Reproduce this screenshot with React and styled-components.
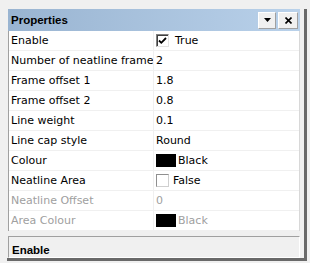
import React from 'react';
import styled, {createGlobalStyle} from 'styled-components';

const GlobalStyle = createGlobalStyle`
  html, body {
    margin: 0;
    padding: 0;
    background: #f0f0f0;
    font-family: "DejaVu Sans", "Liberation Sans", sans-serif;
  }
`;

const Panel = styled.div`
  box-sizing: border-box;
  margin: 9px 0 0 7px;
  width: 300px;
  height: 252px;
  padding: 0 4px 0 1px;
  background: #f0f0f0;
  border-right: 3px solid #696969;
  border-bottom: 3px solid #696969;
  display: flex;
  flex-direction: column;
  overflow: hidden;
`;

const TitleBar = styled.div`
  height: 22px;
  flex: none;
  display: flex;
  align-items: center;
  padding: 0 2px 0 3px;
  background: linear-gradient(to right, #99b4d1, #b9d1ea);
`;

const Title = styled.div`
  flex: 1;
  font-family: "Liberation Sans", Arial, sans-serif;
  font-weight: bold;
  font-size: 11.5px;
  color: #000;
`;

const TitleButton = styled.button`
  box-sizing: border-box;
  width: ${p => p.$w}px;
  height: 17px;
  margin-left: 2px;
  padding: 0;
  display: flex;
  align-items: center;
  justify-content: center;
  background: #f0f0f0;
  border: 1px solid;
  border-color: #ffffff #a0a0a0 #a0a0a0 #ffffff;
`;

const Grid = styled.div`
  flex: none;
  background: #fff;
  border-left: 1px solid #a0a0a0;
  border-right: 1px solid #d8d8d8;
`;

const Row = styled.div`
  display: grid;
  grid-template-columns: 145px 1fr;
  height: 19px;
  border-bottom: 1px solid #f0f0f0;
  font-size: 11px;
  color: ${p => (p.$disabled ? '#a0a0a0' : '#000')};
`;

const Label = styled.div`
  display: flex;
  align-items: center;
  padding-left: 2px;
  white-space: nowrap;
  overflow: hidden;
  border-right: 1px solid #f0f0f0;
`;

const Value = styled.div`
  display: flex;
  align-items: center;
  padding-left: 2px;
  gap: ${p => p.$gap || 4}px;
  white-space: nowrap;
`;

const Check = styled.span`
  box-sizing: border-box;
  width: 13px;
  height: 13px;
  display: inline-flex;
  align-items: center;
  justify-content: center;
  background: #fff;
  border: 1px solid;
  border-color: ${p =>
    p.$sunken ? '#808080 #e3e3e3 #e3e3e3 #808080' : '#8f8f8f #cfcfcf #cfcfcf #8f8f8f'};
  box-shadow: ${p => (p.$sunken ? 'inset 1px 1px 0 #404040' : 'none')};
`;

const Swatch = styled.span`
  width: 20px;
  height: 13px;
  background: #000;
`;

const Description = styled.div`
  box-sizing: border-box;
  margin-top: 5px;
  height: 22px;
  flex: none;
  padding: 7px 0 0 3px;
  border: 1px solid;
  border-color: #a0a0a0 #ffffff #ffffff #a0a0a0;
  font-family: "Liberation Sans", Arial, sans-serif;
  font-size: 11.5px;
  font-weight: bold;
  overflow: hidden;
`;

const rows = [
  {label: 'Enable', value: 'True', check: true, checked: true},
  {label: 'Number of neatline frames', value: '2'},
  {label: 'Frame offset 1', value: '1.8'},
  {label: 'Frame offset 2', value: '0.8'},
  {label: 'Line weight', value: '0.1'},
  {label: 'Line cap style', value: 'Round'},
  {label: 'Colour', value: 'Black', swatch: true},
  {label: 'Neatline Area', value: 'False', check: true},
  {label: 'Neatline Offset', value: '0', disabled: true},
  {label: 'Area Colour', value: 'Black', swatch: true, disabled: true},
];

const App = () => (
  <>
    <GlobalStyle/>
    <Panel>
      <TitleBar>
        <Title>Properties</Title>
        <TitleButton $w={18}>
          <svg width="7" height="4" viewBox="0 0 7 4">
            <path d="M0 0h7L3.5 4z" fill="#000"/>
          </svg>
        </TitleButton>
        <TitleButton $w={20}>
          <svg width="7" height="7" viewBox="0 0 7 7">
            <path d="M0.5 0.5l6 6M6.5 0.5l-6 6" stroke="#000" strokeWidth="1.6"/>
          </svg>
        </TitleButton>
      </TitleBar>
      <Grid>
        {rows.map(r => (
          <Row key={r.label} $disabled={r.disabled}>
            <Label>{r.label}</Label>
            <Value $gap={r.checked ? 6 : r.check ? 4 : 2}>
              {r.check && (
                <Check $sunken={r.checked}>
                  {r.checked && (
                    <svg width="9" height="9" viewBox="0 0 9 9">
                      <path d="M1 4.5l2.3 2.3L8 2" stroke="#000" strokeWidth="1.8" fill="none"/>
                    </svg>
                  )}
                </Check>
              )}
              {r.swatch && <Swatch/>}
              {r.value}
            </Value>
          </Row>
        ))}
      </Grid>
      <Description>Enable</Description>
    </Panel>
  </>
);

export default App;
